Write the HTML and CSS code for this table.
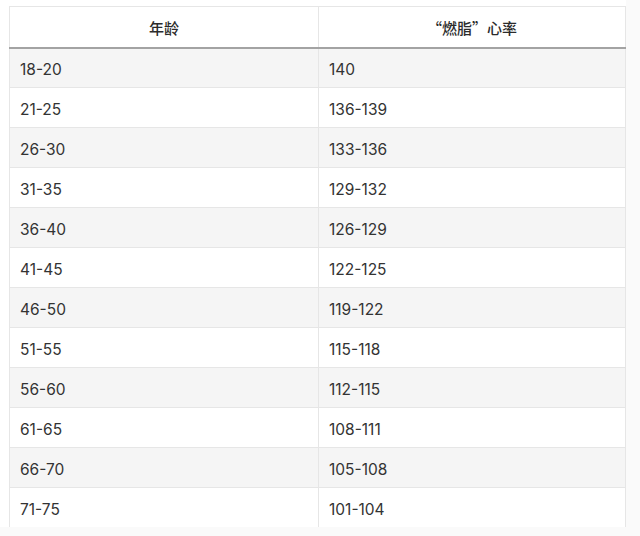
FILE: index.html
```html
<!DOCTYPE html>
<html lang="zh">
<head>
<meta charset="utf-8">
<link rel="stylesheet" href="styles.css">
</head>
<body>
<div class="page">
  <div class="scroller">
    <table class="hr-table">
      <thead>
        <tr><th>年龄</th><th>“燃脂”心率</th></tr>
      </thead>
      <tbody>
        <tr><td>18-20</td><td>140</td></tr>
        <tr><td>21-25</td><td>136-139</td></tr>
        <tr><td>26-30</td><td>133-136</td></tr>
        <tr><td>31-35</td><td>129-132</td></tr>
        <tr><td>36-40</td><td>126-129</td></tr>
        <tr><td>41-45</td><td>122-125</td></tr>
        <tr><td>46-50</td><td>119-122</td></tr>
        <tr><td>51-55</td><td>115-118</td></tr>
        <tr><td>56-60</td><td>112-115</td></tr>
        <tr><td>61-65</td><td>108-111</td></tr>
        <tr><td>66-70</td><td>105-108</td></tr>
        <tr class="last"><td>71-75</td><td>101-104</td></tr>
      </tbody>
    </table>
  </div>
</div>
</body>
</html>
```
FILE: styles.css
```css
html, body {
  margin: 0;
  padding: 0;
  background: #fafafa;
}
body {
  width: 640px;
  height: 536px;
  overflow: hidden;
  font-family: Inter, "Noto Sans CJK SC", sans-serif;
  color: #333;
}
.page {
  background: #fff;
  width: 626px;
  height: 527px;
  padding: 6px 0 0 9px;
  box-sizing: border-box;
}
.scroller {
  height: 521px;
  overflow: hidden;
}
.hr-table {
  border-collapse: collapse;
  width: 617px;
  table-layout: fixed;
  font-size: 15.5px;
}
.hr-table th, .hr-table td {
  border: 1px solid #e6e6e6;
  padding: 3px 10px 0;
  text-align: left;
  box-sizing: border-box;
}
.hr-table th {
  font-weight: 500;
  text-align: center;
  height: 41px;
  padding-top: 1px;
  border-bottom: 2px solid #a3a3a3;
  font-family: "Noto Sans CJK SC", sans-serif;
  font-size: 15px;
  color: #2b2b2b;
}
.hr-table th:first-child, .hr-table td:first-child {
  width: 309px;
}
.hr-table tbody tr:nth-child(odd) td {
  background: #f5f5f5;
}
.hr-table td {
  height: 40px;
  font-weight: 400;
}
.hr-table tr.last td {
  border-bottom: none;
}
```
